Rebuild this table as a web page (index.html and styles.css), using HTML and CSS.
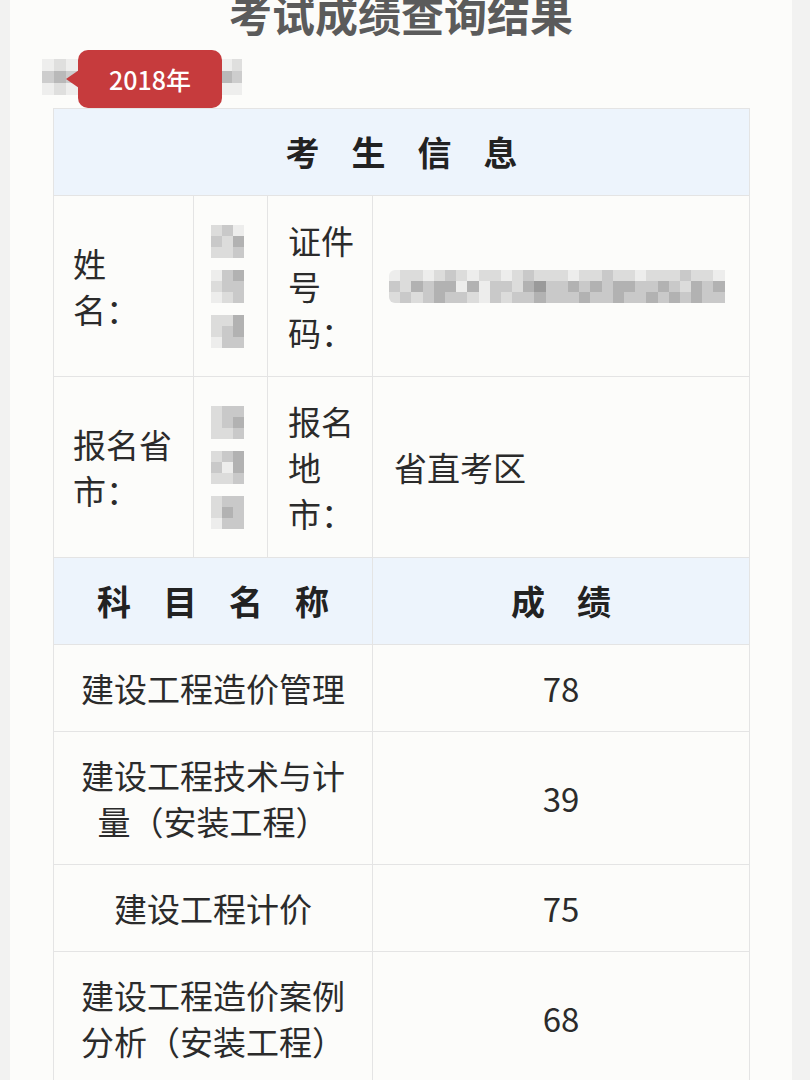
FILE: index.html
```html
<!DOCTYPE html>
<html lang="zh-CN">
<head>
<meta charset="utf-8">
<title>考试成绩查询结果</title>
<link rel="stylesheet" href="styles.css">
</head>
<body>
<div class="page">
  <h1 class="title">考试成绩查询结果</h1>
  <div class="badge-row">
    <div class="px px-side-l">
      <i class="a"></i><i class="b"></i><i class="a"></i>
      <i class="c"></i><i class="d"></i><i class="c"></i>
      <i class="a"></i><i class="b"></i><i class="a"></i>
    </div>
    <div class="badge">2018年</div>
    <div class="px px-side-r">
      <i class="a"></i><i class="b"></i>
      <i class="d"></i><i class="c"></i>
      <i class="a"></i><i class="a"></i>
    </div>
  </div>

  <table class="result">
    <colgroup>
      <col class="c1"><col class="c2"><col class="c3"><col class="c4">
    </colgroup>
    <tr class="head">
      <th colspan="4"><span class="spaced">考生信息</span></th>
    </tr>
    <tr class="info">
      <td class="label">姓<br>名：</td>
      <td class="masked">
        <div class="name-stack">
          <div class="px px-name"><i class="b"></i><i class="c"></i><i class="a"></i><i class="c"></i><i class="b"></i><i class="d"></i><i class="b"></i><i class="b"></i><i class="c"></i></div>
          <div class="px px-name"><i class="a"></i><i class="c"></i><i class="d"></i><i class="b"></i><i class="c"></i><i class="c"></i><i class="a"></i><i class="b"></i><i class="c"></i></div>
          <div class="px px-name"><i class="b"></i><i class="b"></i><i class="d"></i><i class="b"></i><i class="c"></i><i class="d"></i><i class="a"></i><i class="c"></i><i class="c"></i></div>
        </div>
      </td>
      <td class="label2">证件号码：</td>
      <td class="value">
        <div class="px px-id">
          <i class="a"></i><i class="b"></i><i class="b"></i><i class="a"></i><i class="b"></i><i class="c"></i><i class="b"></i><i class="a"></i><i class="b"></i><i class="b"></i><i class="a"></i><i class="b"></i><i class="c"></i><i class="b"></i><i class="b"></i><i class="b"></i><i class="a"></i><i class="b"></i><i class="b"></i><i class="c"></i><i class="b"></i><i class="b"></i><i class="a"></i><i class="b"></i><i class="b"></i><i class="b"></i><i class="c"></i><i class="b"></i><i class="b"></i><i class="a"></i>
          <i class="c"></i><i class="b"></i><i class="d"></i><i class="c"></i><i class="d"></i><i class="d"></i><i class="a"></i><i class="d"></i><i class="a"></i><i class="c"></i><i class="c"></i><i class="b"></i><i class="d"></i><i class="e"></i><i class="c"></i><i class="c"></i><i class="d"></i><i class="c"></i><i class="d"></i><i class="c"></i><i class="d"></i><i class="d"></i><i class="c"></i><i class="c"></i><i class="d"></i><i class="c"></i><i class="b"></i><i class="d"></i><i class="c"></i><i class="d"></i>
          <i class="b"></i><i class="c"></i><i class="b"></i><i class="c"></i><i class="d"></i><i class="c"></i><i class="c"></i><i class="b"></i><i class="a"></i><i class="c"></i><i class="b"></i><i class="c"></i><i class="c"></i><i class="d"></i><i class="c"></i><i class="c"></i><i class="c"></i><i class="d"></i><i class="c"></i><i class="c"></i><i class="d"></i><i class="c"></i><i class="c"></i><i class="d"></i><i class="c"></i><i class="d"></i><i class="c"></i><i class="d"></i><i class="c"></i><i class="c"></i>
        </div>
      </td>
    </tr>
    <tr class="info">
      <td class="label">报名省市：</td>
      <td class="masked">
        <div class="name-stack">
          <div class="px px-name"><i class="b"></i><i class="c"></i><i class="c"></i><i class="b"></i><i class="c"></i><i class="d"></i><i class="b"></i><i class="b"></i><i class="c"></i></div>
          <div class="px px-name"><i class="b"></i><i class="c"></i><i class="d"></i><i class="c"></i><i class="a"></i><i class="d"></i><i class="b"></i><i class="b"></i><i class="c"></i></div>
          <div class="px px-name"><i class="b"></i><i class="c"></i><i class="c"></i><i class="b"></i><i class="d"></i><i class="c"></i><i class="a"></i><i class="c"></i><i class="c"></i></div>
        </div>
      </td>
      <td class="label2">报名地市：</td>
      <td class="value">省直考区</td>
    </tr>
    <tr class="head">
      <th colspan="3"><span class="spaced">科目名称</span></th>
      <th><span class="spaced">成绩</span></th>
    </tr>
    <tr class="subject">
      <td colspan="3">建设工程造价管理</td>
      <td class="score">78</td>
    </tr>
    <tr class="subject">
      <td colspan="3">建设工程技术与计量（安装工程）</td>
      <td class="score">39</td>
    </tr>
    <tr class="subject">
      <td colspan="3">建设工程计价</td>
      <td class="score">75</td>
    </tr>
    <tr class="subject">
      <td colspan="3">建设工程造价案例分析（安装工程）</td>
      <td class="score">68</td>
    </tr>
  </table>
</div>
</body>
</html>
```

FILE: styles.css
```css
html, body {
  margin: 0;
  padding: 0;
}

body {
  background: #f2f2f1;
  font-family: "Noto Sans CJK SC", "Noto Sans", sans-serif;
  color: #2b2b2b;
  overflow: hidden;
}

.page {
  margin: 0 18px 0 10px;
  background: #fcfcfa;
  min-height: 1080px;
  overflow: hidden;
}

.title {
  margin: -8px 0 0;
  height: 43px;
  font-size: 43px;
  line-height: 43px;
  font-weight: 700;
  color: #5b5b5b;
  text-align: center;
}

.badge-row {
  display: flex;
  align-items: center;
  height: 73px;
  padding-left: 32px;
}

.px {
  display: grid;
}

.px i {
  display: block;
}

.px .a { background: #ededec; }
.px .b { background: #dcdcdb; }
.px .c { background: #c9c9c9; }
.px .d { background: #b2b2b2; }
.px .e { background: #9a9a9a; }

.px-side-l {
  grid-template-columns: repeat(3, 12px);
  grid-template-rows: repeat(3, 12px);
  margin-top: 10px;
  opacity: 0.9;
}

.px-side-r {
  grid-template-columns: repeat(2, 10px);
  grid-template-rows: repeat(3, 12px);
  margin-top: 10px;
  opacity: 0.9;
}

.badge {
  position: relative;
  margin-top: 15px;
  width: 144px;
  height: 58px;
  border-radius: 10px;
  background: #c63b3d;
  color: #fff;
  font-family: "Noto Sans CJK SC", "Noto Sans", sans-serif;
  font-size: 25px;
  font-weight: 500;
  line-height: 58px;
  text-align: center;
}

.badge::before {
  content: "";
  position: absolute;
  left: -12px;
  top: 20px;
  border-top: 9px solid transparent;
  border-bottom: 9px solid transparent;
  border-right: 13px solid #c63b3d;
}

.result {
  margin-left: 43px;
  width: 696px;
  table-layout: fixed;
  border-collapse: collapse;
  font-size: 33px;
  line-height: 46px;
}

.c1 { width: 140px; }
.c2 { width: 74px; }
.c3 { width: 105px; }
.c4 { width: 377px; }

.result th,
.result td {
  border: 1px solid #e4e4e4;
  padding: 20px 0;
  vertical-align: middle;
}

.result .info td {
  padding-top: 21px;
  padding-bottom: 21px;
}

.result .head th {
  background: #edf4fc;
  font-size: 34px;
  font-weight: 700;
  color: #222;
  text-align: center;
}

.spaced {
  letter-spacing: 32px;
  padding-left: 32px;
}

.result .info .label {
  padding-left: 19px;
  padding-right: 10px;
}

.result .info .masked {
  padding-left: 17px;
}

.name-stack {
  display: flex;
  flex-direction: column;
  gap: 12px;
}

.px-name {
  grid-template-columns: repeat(3, 11px);
  grid-template-rows: repeat(3, 11px);
  width: 33px;
}

.result .info .label2 {
  padding-left: 20px;
  padding-right: 5px;
}

.result .info .value {
  padding-left: 21px;
}

.px-id {
  grid-template-columns: repeat(30, 11.2px);
  grid-template-rows: repeat(3, 11px);
  width: 336px;
  margin-left: -5px;
  border-radius: 6px 0 0 6px;
  overflow: hidden;
}

.result .subject td {
  text-align: center;
  padding-left: 20px;
  padding-right: 20px;
}

.result .subject .score {
  padding-left: 0;
  padding-right: 0;
}
```
